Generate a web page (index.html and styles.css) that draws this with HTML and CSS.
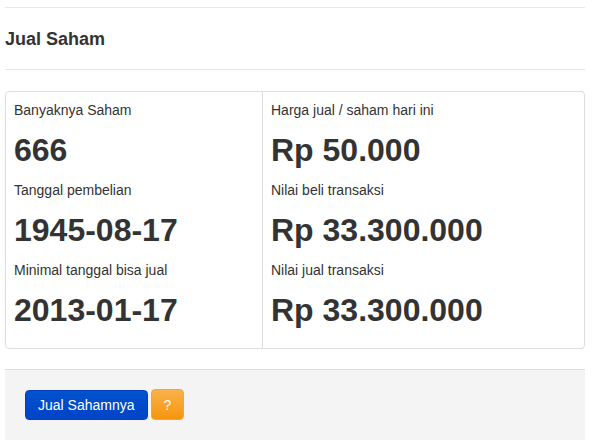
FILE: index.html
```html
<!DOCTYPE html>
<html lang="id">
<head>
<meta charset="utf-8">
<title>Jual Saham</title>
<link rel="stylesheet" href="styles.css">
</head>
<body>
<div class="page">
  <div class="header">
    <h3 class="title">Jual Saham</h3>
  </div>
  <div class="info">
    <div class="cell cell-left">
      <p class="label">Banyaknya Saham</p>
      <h1 class="value">666</h1>
      <p class="label">Tanggal pembelian</p>
      <h1 class="value">1945-08-17</h1>
      <p class="label">Minimal tanggal bisa jual</p>
      <h1 class="value">2013-01-17</h1>
    </div>
    <div class="cell cell-right">
      <p class="label">Harga jual / saham hari ini</p>
      <h1 class="value">Rp 50.000</h1>
      <p class="label">Nilai beli transaksi</p>
      <h1 class="value">Rp 33.300.000</h1>
      <p class="label">Nilai jual transaksi</p>
      <h1 class="value">Rp 33.300.000</h1>
    </div>
  </div>
  <div class="footer">
    <button class="btn btn-primary">Jual Sahamnya</button>
    <button class="btn btn-warning">?</button>
  </div>
</div>
</body>
</html>
```

FILE: styles.css
```css
html, body {
  margin: 0;
  padding: 0;
  background: #fff;
}
body {
  font-family: "Liberation Sans", Arial, sans-serif;
  font-size: 14px;
  line-height: 20px;
  color: #333;
}
.page {
  margin: 7px 8px 0 5px;
}
.header {
  border-top: 1px solid #e9e9e9;
  border-bottom: 1px solid #e5e5e5;
  padding: 21px 0 20px;
}
.title {
  margin: 0;
  font-size: 18px;
  line-height: 20px;
  font-weight: bold;
  color: #333;
}
.info {
  margin-top: 21px;
  border: 1px solid #dddddd;
  border-radius: 4px;
  display: grid;
  grid-template-columns: 256px 1fr;
}
.cell {
  padding: 8px;
}
.cell-right {
  border-left: 1px solid #dddddd;
}
.label {
  margin: 0 0 10px;
  font-size: 14px;
  line-height: 20px;
}
.value {
  margin: 0 0 10px;
  font-size: 32px;
  line-height: 40px;
  font-weight: bold;
  color: #333;
}
.footer {
  margin-top: 20px;
  border-top: 1px solid #dddddd;
  background: #f4f4f4;
  padding: 19px 20px 20px;
  display: flex;
  gap: 3px;
  align-items: center;
}
.btn {
  font-family: "Liberation Sans", Arial, sans-serif;
  font-size: 14px;
  line-height: 20px;
  padding: 4px 12px;
  border-radius: 4px;
  color: #fff;
  cursor: pointer;
}
.btn-primary {
  background: linear-gradient(#0052cf, #0043c8);
  border: 1px solid #0040c0;
}
.btn-warning {
  height: 31px;
  background: linear-gradient(#fbb24a, #f6950c);
  border: 1px solid #e8a94d;
}
```
